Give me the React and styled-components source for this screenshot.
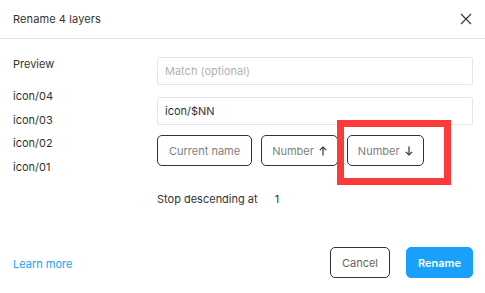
import styled, { createGlobalStyle } from "styled-components";

const GlobalStyle = createGlobalStyle`
  html, body {
    margin: 0;
    padding: 0;
    background: #fff;
  }
  body {
    font-family: "Inter", "Noto Sans", sans-serif;
    font-size: 11px;
    color: #333;
  }
`;

const blue = "#18a0fb";

const Dialog = styled.div`
  height: 100vh;
  display: flex;
  flex-direction: column;
  background: #fff;
`;

const Header = styled.div`
  height: 38px;
  display: flex;
  align-items: center;
  justify-content: space-between;
  padding: 0 9px 0 13px;
  border-bottom: 1px solid #e5e5e5;
`;

const Title = styled.span`
  font-size: 11px;
  color: #333;
  letter-spacing: 0.1px;
`;

const CloseButton = styled.button`
  width: 20px;
  height: 20px;
  border: none;
  background: none;
  padding: 0;
  display: flex;
  align-items: center;
  justify-content: center;
  margin-top: -1px;
`;

const Body = styled.div`
  display: flex;
  padding: 18px 12px 0 13px;
`;

const Sidebar = styled.div`
  width: 144px;
  display: flex;
  flex-direction: column;
`;

const SideLabel = styled.div`
  line-height: 16px;
  color: #333;
  margin-top: -1px;
`;

const PreviewList = styled.div`
  margin-top: 13px;
  display: flex;
  flex-direction: column;
`;

const PreviewItem = styled.div`
  line-height: 23.5px;
  color: #333;
`;

const Main = styled.div`
  flex: 1;
  display: flex;
  flex-direction: column;
`;

const Input = styled.input`
  height: 28px;
  box-sizing: border-box;
  border: 1px solid #e5e5e5;
  border-radius: 2px;
  padding: 0 7px;
  font-family: inherit;
  font-size: 11px;
  color: #333;
  outline: none;
  margin-bottom: 12px;

  &::placeholder {
    color: #b3b3b3;
  }
`;

const TokenRow = styled.div`
  display: flex;
  gap: 9px;
  margin-top: -2px;
`;

const Token = styled.button`
  height: 31px;
  box-sizing: border-box;
  padding: 0 ${(p) => (p.$arrow ? 10 : 11)}px;
  border: 1px solid #333;
  border-radius: 5px;
  background: #fff;
  font-family: inherit;
  font-size: 11px;
  color: #808080;
  display: flex;
  align-items: center;
  gap: 5px;
`;

const HighlightWrap = styled.div`
  position: relative;
`;

const Highlight = styled.div`
  position: absolute;
  left: -10px;
  right: -27px;
  top: -15px;
  bottom: -19px;
  border: 7px solid #fb3a3a;
`;

const StopRow = styled.div`
  margin-top: 25px;
  line-height: 16px;
  display: flex;
  gap: 17px;
  color: #333;
`;

const Footer = styled.div`
  margin-top: auto;
  display: flex;
  align-items: center;
  justify-content: space-between;
  padding: 0 12px 15px 13px;
`;

const LearnMore = styled.a`
  color: ${blue};
  font-size: 11px;
  text-decoration: none;
  margin-top: 2px;
`;

const Actions = styled.div`
  display: flex;
  gap: 16px;
`;

const FooterButton = styled.button`
  height: 31px;
  box-sizing: border-box;
  border-radius: 5px;
  font-family: inherit;
  font-size: 11px;
  padding: 0;
  border: 1px solid ${(p) => (p.$primary ? blue : "#333")};
  background: ${(p) => (p.$primary ? blue : "#fff")};
  color: ${(p) => (p.$primary ? "#fff" : "#666")};
  font-weight: ${(p) => (p.$primary ? 600 : 400)};
  width: ${(p) => (p.$primary ? 67 : 60)}px;
`;

const Arrow = ({ down }) => (
  <svg width="8" height="10" viewBox="0 0 8 10" fill="none">
    <g
      stroke="#333"
      strokeWidth="1.2"
      transform={down ? "rotate(180 4 5)" : undefined}
    >
      <path d="M4 9.5V1" />
      <path d="M0.8 4.2L4 1L7.2 4.2" />
    </g>
  </svg>
);

const CloseIcon = () => (
  <svg width="12" height="12" viewBox="0 0 12 12" fill="none">
    <path d="M1 1L11 11M11 1L1 11" stroke="#333" strokeWidth="1.1" />
  </svg>
);

const previews = ["icon/04", "icon/03", "icon/02", "icon/01"];

const App = () => {
  return (
    <>
      <GlobalStyle />
      <Dialog>
        <Header>
          <Title>Rename 4 layers</Title>
          <CloseButton aria-label="Close">
            <CloseIcon />
          </CloseButton>
        </Header>
        <Body>
          <Sidebar>
            <SideLabel>Preview</SideLabel>
            <PreviewList>
              {previews.map((name) => (
                <PreviewItem key={name}>{name}</PreviewItem>
              ))}
            </PreviewList>
          </Sidebar>
          <Main>
            <Input placeholder="Match (optional)" />
            <Input defaultValue="icon/$NN" />
            <TokenRow>
              <Token>Current name</Token>
              <Token $arrow>
                Number <Arrow />
              </Token>
              <HighlightWrap>
                <Token $arrow>
                  Number <Arrow down />
                </Token>
                <Highlight />
              </HighlightWrap>
            </TokenRow>
            <StopRow>
              <span>Stop descending at</span>
              <span>1</span>
            </StopRow>
          </Main>
        </Body>
        <Footer>
          <LearnMore href="#">Learn more</LearnMore>
          <Actions>
            <FooterButton>Cancel</FooterButton>
            <FooterButton $primary>Rename</FooterButton>
          </Actions>
        </Footer>
      </Dialog>
    </>
  );
};

export default App;
